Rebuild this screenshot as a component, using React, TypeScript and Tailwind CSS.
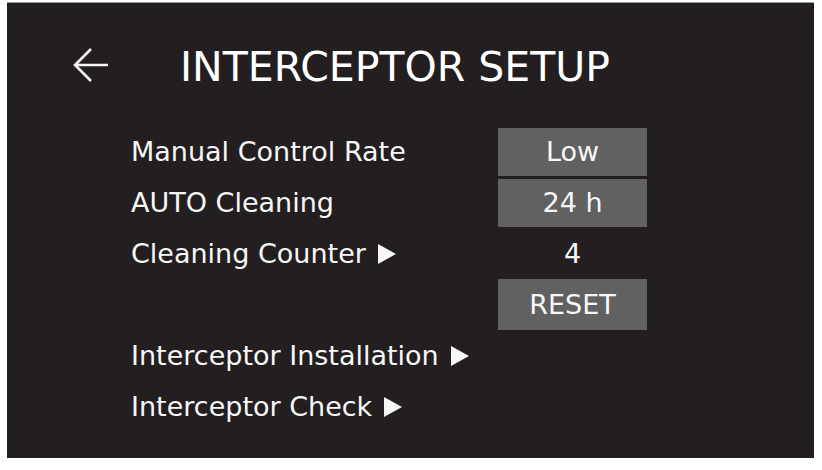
import React from "react";

const font = { fontFamily: '"DejaVu Sans", Verdana, sans-serif' };

function Tri() {
  return (
    <svg width="18" height="20" viewBox="0 0 18 20" className="ml-[12px] shrink-0">
      <polygon points="0,0 18,10 0,20" fill="#f7f7f7" />
    </svg>
  );
}

function Label({ text, arrow }: { text: string; arrow?: boolean }) {
  return (
    <div className="flex items-center text-[27px] leading-none text-[#f7f7f7]">
      <span>{text}</span>
      {arrow && <Tri />}
    </div>
  );
}

function Box({ text }: { text: string }) {
  return (
    <div className="flex h-[48px] w-[149px] items-center justify-center bg-[#616161] text-[27px] leading-none text-[#f7f7f7]">
      {text}
    </div>
  );
}

export default function App() {
  return (
    <div className="h-[470px] w-[822px] bg-white pt-[2px] pl-[7px]" style={font}>
      <div className="h-[456px] w-[807px] border-t border-[#9a9a9a] bg-[#231f20]">
        <div className="flex h-[70px] items-center mt-[29px] pl-[65px]">
          <svg width="37" height="36" viewBox="0 0 37 36" className="mb-[4px]" fill="none">
            <path d="M36 18H3M19 2L3 18L19 34" stroke="#f7f7f7" strokeWidth="2.6" />
          </svg>
          <h1 className="ml-[71px] text-[41px] font-normal leading-none text-white">
            INTERCEPTOR SETUP
          </h1>
        </div>
        <div className="mt-[24px] ml-[124px] grid grid-cols-[367px_149px] auto-rows-[51px] items-center">
          <Label text="Manual Control Rate" />
          <Box text="Low" />
          <Label text="AUTO Cleaning" />
          <Box text="24 h" />
          <Label text="Cleaning Counter" arrow />
          <div className="text-center text-[27px] leading-none text-[#f7f7f7]">4</div>
          <div />
          <div className="h-[51px] flex items-center">
            <div className="flex h-[51px] w-[149px] items-center justify-center bg-[#616161] text-[27px] leading-none text-[#f7f7f7]">
              RESET
            </div>
          </div>
          <Label text="Interceptor Installation" arrow />
          <div />
          <Label text="Interceptor Check" arrow />
          <div />
        </div>
      </div>
    </div>
  );
}
